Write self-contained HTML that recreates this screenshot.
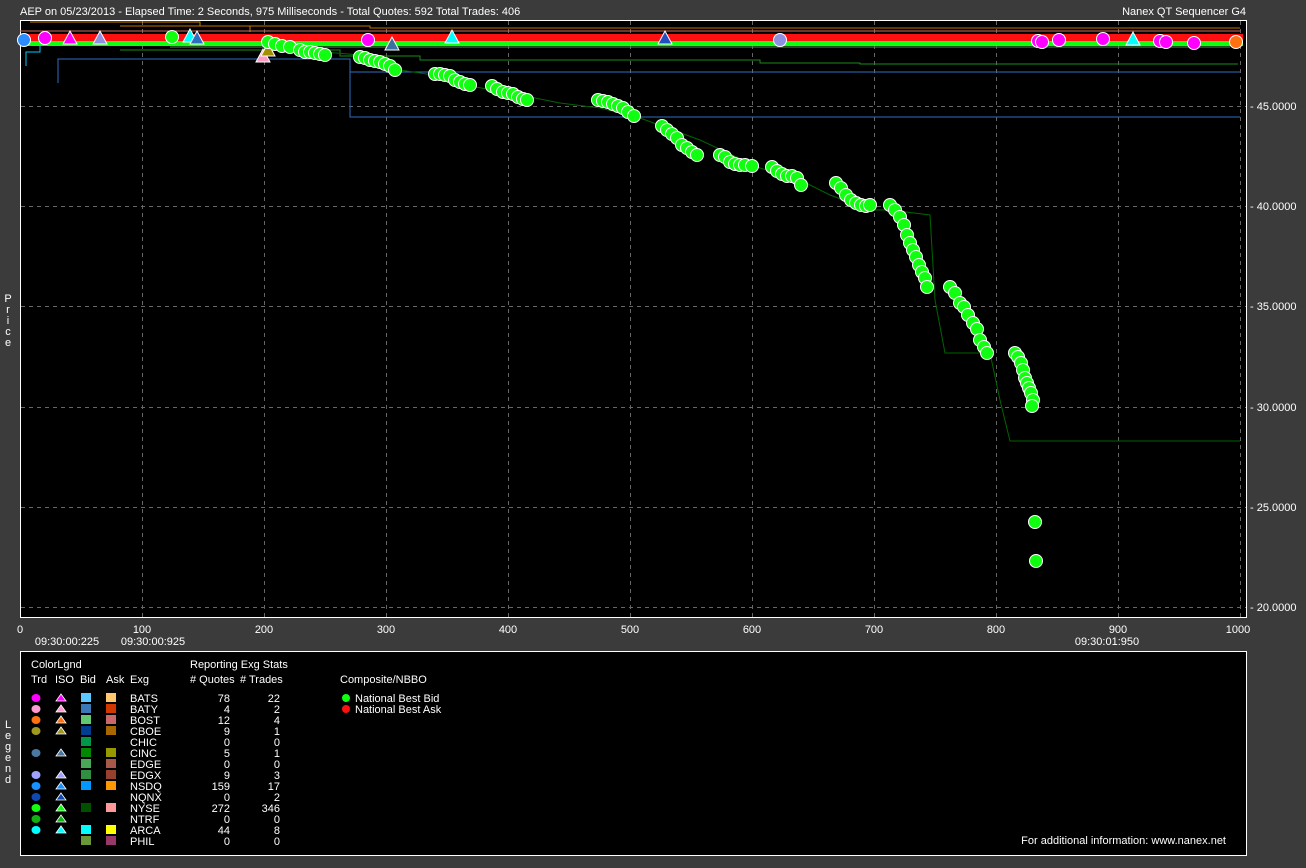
<!DOCTYPE html>
<html><head><meta charset="utf-8"><style>
html,body{margin:0;padding:0;background:#3b3b3b;width:1306px;height:868px;overflow:hidden}
svg{display:block;font-family:"Liberation Sans",sans-serif}
text{fill:#fff;font-size:11px}
</style></head><body>
<svg id="s" width="1306" height="868" viewBox="0 0 1306 868">
<rect width="1306" height="868" fill="#3b3b3b"/>
<text x="20" y="15">AEP on 05/23/2013  -  Elapsed Time: 2 Seconds, 975 Milliseconds  -  Total Quotes: 592  Total Trades: 406</text>
<text x="1246" y="15" text-anchor="end">Nanex QT Sequencer G4</text>
<rect x="20.5" y="20.5" width="1226" height="597" fill="#000" stroke="#fff"/>
<g stroke="#666" stroke-dasharray="4,4" stroke-width="1">
<path d="M142.5 21V617M264.5 21V617M386.5 21V617M508.5 21V617M630.5 21V617M752.5 21V617M874.5 21V617M996.5 21V617M1118.5 21V617M1240.5 21V617"/>
<path d="M21 106.5H1246M21 206.5H1246M21 306.5H1246M21 407.5H1246M21 507.5H1246M21 607.5H1246"/>
</g>
<g font-size="11">
<text x="1250" y="110">-  45.0000</text><text x="1250" y="210">-  40.0000</text><text x="1250" y="310">-  35.0000</text><text x="1250" y="411">-  30.0000</text><text x="1250" y="511">-  25.0000</text><text x="1250" y="611">-  20.0000</text>
</g>
<g text-anchor="middle">
<text x="20" y="633">0</text><text x="142" y="633">100</text><text x="264" y="633">200</text><text x="386" y="633">300</text><text x="508" y="633">400</text><text x="630" y="633">500</text><text x="752" y="633">600</text><text x="874" y="633">700</text><text x="996" y="633">800</text><text x="1118" y="633">900</text><text x="1238" y="633">1000</text>
<text x="67" y="645">09:30:00:225</text><text x="153" y="645">09:30:00:925</text><text x="1107" y="645">09:30:01:950</text>
</g>
<g text-anchor="middle" font-size="11">
<text x="8" y="302">P</text><text x="8" y="313">r</text><text x="8" y="324">i</text><text x="8" y="335">c</text><text x="8" y="346">e</text>
<text x="8" y="728">L</text><text x="8" y="739">e</text><text x="8" y="750">g</text><text x="8" y="761">e</text><text x="8" y="772">n</text><text x="8" y="783">d</text>
</g>
<!-- lines -->
<g fill="none" stroke-width="1">
<path d="M58 83V59H350V117H1240" stroke="#2b6fc0"/>
<path d="M350 72H1240" stroke="#2b6fc0"/>
<path d="M26 66V52H40V46" stroke="#00c8ff"/>
<path d="M120 50H340V56H420V60H760V63H860V64H1238" stroke="#1a8a1a"/>
<path d="M170 47H1230" stroke="#40a040"/>
<path d="M270 46L300 50L360 55L400 70L440 76L470 86L520 95L560 103L600 108L640 118L700 140L760 168L800 180L830 195L870 210L890 210L930 215L935 300L945 353L990 353L1000 400L1010 441L1240 441" stroke="#006400"/>
<path d="M30 22H200V26H250V32" stroke="#d08000"/>
<path d="M120 26H370V28H1240" stroke="#c07000"/>
<path d="M20 31H1240" stroke="#d07060"/>
</g>
<rect x="21" y="34" width="1222" height="7" fill="#ff1010"/>
<rect x="21" y="41" width="1222" height="5" fill="#10ff10"/>
<g id="top"></g>
<g id="dots"></g>
<!-- legend -->
<rect x="20.5" y="651.5" width="1226" height="204" fill="#000" stroke="#fff"/>
<text x="31" y="668">ColorLgnd</text>
<text x="31" y="683">Trd</text><text x="55" y="683">ISO</text><text x="80" y="683">Bid</text><text x="106" y="683">Ask</text><text x="130" y="683">Exg</text>
<text x="190" y="668">Reporting Exg Stats</text>
<text x="190" y="683"># Quotes</text><text x="240" y="683"># Trades</text>
<text x="340" y="683">Composite/NBBO</text>
<circle cx="346" cy="698" r="4" fill="#10ff10"/><text x="355" y="702">National Best Bid</text>
<circle cx="346" cy="709" r="4" fill="#ff1010"/><text x="355" y="713">National Best Ask</text>
<g id="leg"></g>
<text x="1226" y="844" text-anchor="end">For additional information: www.nanex.net</text>
</svg>
<script>
var NS="http://www.w3.org/2000/svg";
function el(p,t,a){var e=document.createElementNS(NS,t);for(var k in a)e.setAttribute(k,a[k]);p.appendChild(e);return e;}
var d=document.getElementById('dots');
var pts=[[268,42],[275,44],[282,46],[290,47],[300,50],[305,52],[310,52],[315,53],[320,54],[325,55],
[360,57],[365,58],[370,60],[375,61],[380,62],[385,64],[390,66],[395,70],
[435,74],[440,74],[445,75],[450,76],[455,80],[460,82],[465,84],[470,85],
[492,86],[497,89],[503,92],[508,93],[513,94],[518,97],[523,99],[527,100],
[598,100],[603,101],[608,102],[613,104],[618,106],[623,108],[628,112],[634,116],
[662,126],[667,130],[672,134],[677,138],[682,145],[687,148],[692,152],[697,155],
[720,155],[725,157],[730,162],[735,164],[740,165],[745,165],[752,166],
[772,167],[777,171],[782,174],[787,176],[792,176],[797,178],[801,185],
[836,183],[841,188],[846,195],[851,200],[856,203],[861,205],[866,206],[870,205],
[890,205],[895,210],[900,217],[904,225],[907,235],[910,243],[913,250],[916,257],[919,265],[922,272],[925,278],[927,287],
[950,287],[955,293],[960,303],[964,307],[968,315],[973,323],[977,329],[980,340],[984,347],[987,353],
[1015,353],[1018,357],[1021,363],[1023,370],[1025,378],[1027,383],[1029,388],[1031,393],[1033,400],[1032,406],
[1035,522],[1036,561]];
pts.forEach(function(p){el(d,'circle',{cx:p[0],cy:p[1],r:6.5,fill:'#10ff10',stroke:'#fff','stroke-width':1});});
var t=document.getElementById('top');
[[24,40,'#2b8cff'],[45,38,'#ff00ff'],[172,37,'#10ff10'],[368,40,'#ff00ff'],[780,40,'#9090e0'],[1038,41,'#ff00ff'],[1042,42,'#ff00ff'],[1059,40,'#ff00ff'],[1103,39,'#ff00ff'],[1160,41,'#ff00ff'],[1166,42,'#ff00ff'],[1194,43,'#ff00ff'],[1236,42,'#ff7010']].forEach(function(c){el(t,'circle',{cx:c[0],cy:c[1],r:6.5,fill:c[2],stroke:'#fff'});});
[[70,38,'#ff00ff'],[100,38,'#9090e0'],[190,36,'#00ffff'],[197,38,'#2b6fc0'],[263,56,'#ff9ac0'],[268,50,'#a09000'],[392,44,'#3a6fa0'],[452,37,'#00ffff'],[665,38,'#2050c0'],[1133,39,'#00ffff']].forEach(function(c){var x=c[0],y=c[1];el(t,'polygon',{points:(x-7)+','+(y+6)+' '+x+','+(y-7)+' '+(x+7)+','+(y+6),fill:c[2],stroke:'#fff'});});
var g=document.getElementById('leg');
var rows=[['BATS','78','22','#ff00ff','#ff00ff','#5bc8ff','#ffc870'],['BATY','4','2','#ff9ad0','#ff9ad0','#3a78b8','#d03800'],['BOST','12','4','#ff7010','#ff7010','#60c870','#c86868'],['CBOE','9','1','#a09820','#a09820','#003c90','#a86800'],['CHIC','0','0',null,null,'#009848',null],['CINC','5','1','#4a78a0','#4a78a0','#008800','#989800'],['EDGE','0','0',null,null,'#48a858','#a85848'],['EDGX','9','3','#a0a0ff','#a0a0ff','#309040','#984030'],['NSDQ','159','17','#1890ff','#1890ff','#0098ff','#ff9800'],['NQNX','0','2','#1048b0','#1048b0',null,null],['NYSE','272','346','#10ff10','#10ff10','#005000','#ff9898'],['NTRF','0','0','#10b010','#10b010',null,null],['ARCA','44','8','#00ffff','#00ffff','#00ffff','#ffff00'],['PHIL','0','0',null,null,'#689838','#983868']];
rows.forEach(function(r,i){var y=698+i*11;
if(r[3])el(g,'ellipse',{cx:36,cy:y,rx:4.5,ry:4,fill:r[3]});
if(r[4])el(g,'polygon',{points:'56,'+(y+3)+' 61,'+(y-4)+' 66,'+(y+3),fill:r[4],stroke:'#fff','stroke-width':0.8});
if(r[5])el(g,'rect',{x:81,y:y-5,width:10,height:9,fill:r[5]});
if(r[6])el(g,'rect',{x:106,y:y-5,width:10,height:9,fill:r[6]});
var tx=el(g,'text',{x:130,y:y+4});tx.textContent=r[0];
tx=el(g,'text',{x:230,y:y+4,'text-anchor':'end'});tx.textContent=r[1];
tx=el(g,'text',{x:280,y:y+4,'text-anchor':'end'});tx.textContent=r[2];});
</script>
</body></html>
